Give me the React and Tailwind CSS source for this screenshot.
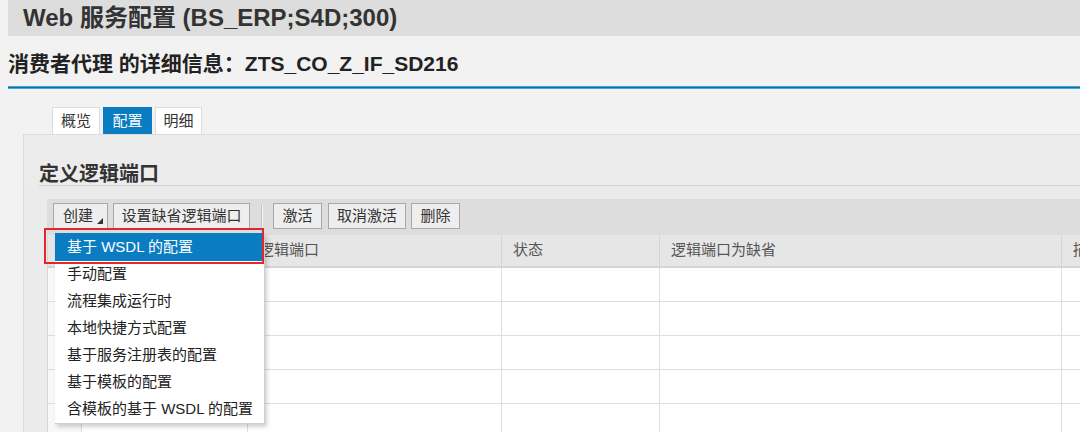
export default function App() {
  const font = { fontFamily: '"Liberation Sans", "Noto Sans CJK SC", sans-serif' };
  const menuItems = [
    "手动配置",
    "流程集成运行时",
    "本地快捷方式配置",
    "基于服务注册表的配置",
    "基于模板的配置",
    "含模板的基于 WSDL 的配置",
  ];
  const rows = [0, 1, 2, 3, 4];
  const cols = ["", "", "逻辑端口", "状态", "逻辑端口为缺省", "描述"];
  return (
    <div className="relative w-[1080px] h-[432px] overflow-hidden bg-[#f2f2f2] text-[#333]" style={font}>
      {/* Title bar */}
      <div className="ml-[8px] h-[36px] bg-[#dddddd] flex items-center pl-[15px] text-[24px] font-bold text-[#333] whitespace-nowrap">
        Web 服务配置 (BS_ERP;S4D;300)
      </div>
      {/* Subtitle */}
      <div className="ml-[8px] h-[50px] pt-[5px] flex items-center text-[21px] font-bold text-[#222] whitespace-nowrap">
        消费者代理 的详细信息：ZTS_CO_Z_IF_SD216
      </div>
      {/* Blue line */}
      <div className="ml-[8px] h-[1px] bg-[#0b6fae] border-y border-[#4aa3db] box-content"></div>
      {/* Tabs */}
      <div className="ml-[52px] mt-[18px] flex gap-[3px] h-[27px] text-[15px]">
        <div className="w-[48px] bg-white border border-b-0 border-[#dcdcdc] flex items-center justify-center text-[#333]">概览</div>
        <div className="w-[49px] bg-[#0a7cc1] border border-b-0 border-[#0a7cc1] flex items-center justify-center text-white">配置</div>
        <div className="w-[47px] bg-white border border-b-0 border-[#dcdcdc] flex items-center justify-center text-[#333]">明细</div>
      </div>
      {/* Panel */}
      <div className="ml-[23px] border-l border-t border-[#dcdcdc] bg-[#ebebeb] h-[300px]">
        <div className="h-[51px] bg-[#ececec] pl-[15px] flex items-end">
          <div className="flex-1 h-[51px] border-b border-[#d4d4d4] flex items-center pt-[28px] text-[20px] font-bold text-[#333]">
            定义逻辑端口
          </div>
        </div>
        <div className="h-[13px]"></div>
        <div className="ml-[23px]">
          {/* Toolbar */}
          <div className="h-[36px] bg-[#dddddd] flex items-start pt-[4px] pl-[6px] text-[15px]">
            <div className="relative w-[55px] h-[26px] border border-[#a8a8a8] bg-[#eeeeee] flex items-center pl-[9px] text-[#333]">
              创建
              <svg className="absolute left-[43px] top-[14px]" width="6" height="6" viewBox="0 0 6 6">
                <polygon points="6,0 6,6 0,6" fill="#333" />
              </svg>
            </div>
            <div className="ml-[5px] w-[137px] h-[26px] border border-[#a8a8a8] bg-[#eeeeee] flex items-center justify-center text-[#333]">设置缺省逻辑端口</div>
            <div className="ml-[11px] mt-[2px] w-[2px] h-[26px] border-l border-[#c2c2c2] border-r border-r-[#f4f4f4]"></div>
            <div className="ml-[10px] w-[49px] h-[26px] border border-[#a8a8a8] bg-[#eeeeee] flex items-center justify-center text-[#333]">激活</div>
            <div className="ml-[6px] w-[78px] h-[26px] border border-[#a8a8a8] bg-[#eeeeee] flex items-center justify-center text-[#333]">取消激活</div>
            <div className="ml-[5px] w-[49px] h-[26px] border border-[#a8a8a8] bg-[#eeeeee] flex items-center justify-center text-[#333]">删除</div>
          </div>
          {/* Table */}
          <div className="grid grid-cols-[34px_166px_254px_158px_402px_200px] border-l border-[#d6d6d6] text-[15px]">
            {cols.map((c, i) => (
              <div
                key={"h" + i}
                className="h-[33px] bg-[#e6e6e6] border-b-2 border-r border-[#d4d4d4] flex items-center pl-[11px] text-[#555] whitespace-nowrap overflow-hidden"
              >
                {c}
              </div>
            ))}
            {rows.map((r) =>
              cols.map((c, i) => (
                <div
                  key={r + "-" + i}
                  className={
                    "h-[34px] border-b border-r border-[#dedede] " + (i === 0 ? "bg-[#f8f8f8]" : "bg-white")
                  }
                ></div>
              ))
            )}
          </div>
        </div>
      </div>

      {/* Dropdown menu */}
      <div className="absolute left-[55px] top-[233px] w-[210px] bg-white border-r border-b border-[#cfcfcf] shadow-[2px_3px_4px_rgba(0,0,0,0.18)] text-[15px]">
        <div className="h-[28px] bg-[#0a7cc1] text-white flex items-center pl-[12px] whitespace-nowrap">基于 WSDL 的配置</div>
        {menuItems.map((m) => (
          <div key={m} className="h-[27px] flex items-center pl-[12px] text-[#222] whitespace-nowrap">
            {m}
          </div>
        ))}
      </div>
      {/* Red highlight box */}
      <div className="absolute left-[44px] top-[228px] w-[220px] h-[36px] border-2 border-[#e3262d]"></div>
    </div>
  );
}
